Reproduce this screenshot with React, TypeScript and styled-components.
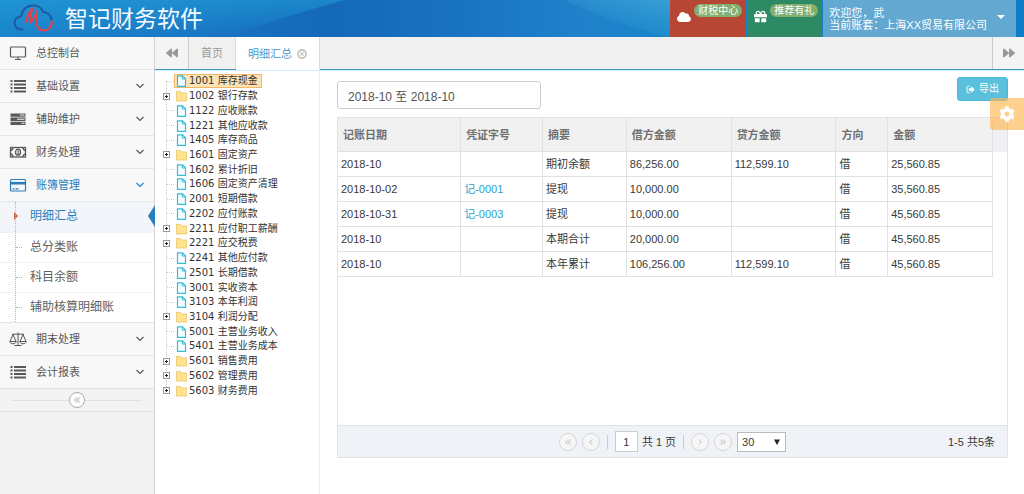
import React, { useState } from 'react';
import styled, { createGlobalStyle, css } from 'styled-components';
import { FaCloud, FaGift, FaCog, FaForward, FaBackward } from 'react-icons/fa';

const Global = createGlobalStyle`
  *, *::before, *::after { box-sizing: border-box; }
  body {
    margin: 0;
    background: #fff;
    color: #393939;
    font: 11px/16px "Liberation Sans", "Noto Sans CJK SC", sans-serif;
  }
  button, input, select { font: inherit; color: inherit; margin: 0; }
  button { cursor: pointer; }
  a { text-decoration: none; }
  ul { list-style: none; margin: 0; padding: 0; }
`;

const Page = styled.div`
  display: flex;
  flex-direction: column;
  min-height: 100vh;
`;

const Header = styled.header`
  position: relative;
  display: flex;
  justify-content: space-between;
  height: 37px;
  padding-right: 8px;
  overflow: hidden;
  background: linear-gradient(to right, #1a84ca 0%, #1a78c4 16%, #1468b8 32%, #1a74c2 46%, #2083cb 58%, #1583ca 66%, #0b7cc8 100%);
`;

const Waves = styled.svg`
  position: absolute;
  inset: 0;
  width: 100%;
  height: 100%;
`;

const Brand = styled.a`
  position: relative;
  display: flex;
  align-items: center;
  gap: 11px;
  padding-left: 13px;
  color: #f4faff;
  font-size: 23px;
  line-height: 36px;
`;

const HeaderNav = styled.nav`
  position: relative;
  display: flex;
  gap: 1px;
  color: #fff;
`;

const HeaderLink = styled.a<{ $bg: string }>`
  display: flex;
  align-items: flex-start;
  gap: 3px;
  padding: 4px 4px 0 7px;
  background: ${p => p.$bg};
  color: #fff;
  svg { margin-top: 6px; }
`;

const Pill = styled.span`
  padding: 0 4px;
  border-radius: 7px;
  background: #82af6f;
  font-size: 10px;
  line-height: 13px;
`;

const UserButton = styled.button`
  display: flex;
  align-items: center;
  gap: 10px;
  padding: 0 11px 0 6px;
  border: 0;
  background: #62a8d1;
  color: #fff;
  line-height: 12px;
  text-align: left;
  span { display: block; }
`;

const Caret = styled.i`
  border: 4px solid transparent;
  border-top-color: #fff;
  border-bottom: 0;
  margin-bottom: 4px;
`;

const Body = styled.div`
  display: flex;
  flex: 1;
`;

const Sidebar = styled.aside`
  flex: none;
  width: 155px;
  border-right: 1px solid #d4d4d4;
  background: #f2f2f2;
`;

const MenuItem = styled.li`
  border-top: 1px solid #e5e5e5;
  &:first-child { border-top: 0; }
`;

const MenuLink = styled.a<{ $open?: boolean }>`
  display: flex;
  align-items: center;
  height: 32px;
  padding: 0 9px 0 9px;
  background: #f8f8f8;
  color: ${p => (p.$open ? '#2b7dbc' : '#585858')};
  > span { flex: 1; padding-left: 9px; }
`;

const SubMenu = styled.ul`
  position: relative;
  border-top: 1px solid #e5e5e5;
  background: #fff;
  &::before {
    content: '';
    position: absolute;
    z-index: 1;
    left: 15px;
    top: 0;
    bottom: 0;
    border-left: 1px dotted #9dbdd6;
  }
`;

const SubLink = styled.a<{ $active?: boolean }>`
  position: relative;
  display: block;
  height: 30px;
  padding-left: 30px;
  color: #616161;
  font-size: 12px;
  line-height: 28px;
  li + li > & { border-top: 1px dotted #e4e4e4; }
  &::before {
    content: '';
    position: absolute;
    left: 16px;
    top: 14px;
    width: 6px;
    border-top: 1px dotted #9dbdd6;
  }
  ${p => p.$active && css`
    background: #f2f6fa;
    color: #2b7dbc;
    &::before {
      left: 14px;
      top: 10px;
      width: 0;
      border: 4px solid transparent;
      border-right-width: 0;
      border-left-color: #c86139;
    }
    &::after {
      content: '';
      position: absolute;
      right: -1px;
      top: 3px;
      border: 11px solid transparent;
      border-left-width: 0;
      border-right: 7px solid #2b7dbc;
    }
  `}
`;

const CollapseRow = styled.div`
  display: flex;
  align-items: center;
  height: 24px;
  padding: 0 12px;
  border-top: 1px solid #e0e0e0;
  border-bottom: 1px solid #e0e0e0;
  background: #f3f3f3;
  &::before, &::after {
    content: '';
    flex: 1;
    border-top: 1px solid #e0e0e0;
  }
`;

const RoundButton = styled.button<{ $muted?: boolean }>`
  display: grid;
  place-items: center;
  width: ${p => (p.$muted ? 18 : 16)}px;
  height: ${p => (p.$muted ? 18 : 16)}px;
  padding: 0;
  border: 1px solid ${p => (p.$muted ? '#d6d6d6' : '#aaa')};
  border-radius: 50%;
  background: ${p => (p.$muted ? '#f6f6f6' : '#fff')};
  color: ${p => (p.$muted ? '#b9b9b9' : '#999')};
`;

const Content = styled.div`
  display: flex;
  flex: 1;
  flex-direction: column;
  min-width: 0;
`;

const TabBar = styled.div`
  display: flex;
  height: 33px;
  border-bottom: 1px solid #4194c4;
  background: #f0f0f0;
`;

const TabArrow = styled.button<{ $end?: boolean }>`
  display: grid;
  place-items: center;
  width: ${p => (p.$end ? 32 : 34)}px;
  padding: 0;
  border: 0 solid #ccc;
  border-width: ${p => (p.$end ? '0 0 0 1px' : '0 1px 0 0')};
  margin-left: ${p => (p.$end ? 'auto' : 0)};
  background: #f4f4f4;
  color: #999;
`;

const Tab = styled.button<{ $active?: boolean }>`
  display: flex;
  align-items: center;
  gap: 5px;
  padding: 0 12px;
  border: 0;
  border-right: 1px solid #dcdcdc;
  margin-bottom: ${p => (p.$active ? -1 : 0)}px;
  background: ${p => (p.$active ? '#fff' : '#f0f0f0')};
  color: ${p => (p.$active ? '#4f99c6' : '#999')};
`;

const Workspace = styled.div`
  display: flex;
  flex: 1;
  border-top: 1px solid #d5edf5;
`;

const TreePane = styled.div`
  flex: none;
  width: 165px;
  padding: 3px 0 0 8px;
  border-right: 1px solid #e3f1f5;
`;

const Tree = styled.ul`
  position: relative;
  display: grid;
  grid-auto-rows: 1fr;
  height: 324px;
  color: #333;
  font: 10px/14px "DejaVu Sans", "Noto Sans CJK SC", sans-serif;
  &::before {
    content: '';
    position: absolute;
    left: 3px;
    top: 7px;
    bottom: 7px;
    border-left: 1px dotted #ccc;
  }
`;

const TreeRow = styled.li`
  display: flex;
  align-items: center;
`;

const Toggle = styled.button`
  position: relative;
  display: grid;
  place-items: center;
  width: 7px;
  height: 7px;
  padding: 0;
  border: 1px solid #999;
  margin-right: 4px;
  background: #fff;
  color: #222;
`;

const Stub = styled.i`
  width: 7px;
  margin: 0 0 0 4px;
  border-top: 1px dotted #ccc;
`;

const TreeLink = styled.a<{ $active?: boolean }>`
  display: flex;
  align-items: center;
  gap: 2px;
  height: 14px;
  padding: 0 3px 0 1px;
  border: 1px solid ${p => (p.$active ? '#f4b76a' : 'transparent')};
  background: ${p => (p.$active ? '#fde4b4' : 'transparent')};
  color: inherit;
  white-space: nowrap;
`;

const Main = styled.main`
  flex: 1;
  min-width: 0;
  padding: 6px 16px 16px 17px;
`;

const Toolbar = styled.div`
  display: flex;
  justify-content: space-between;
  align-items: flex-start;
  margin-bottom: 8px;
`;

const DateInput = styled.input`
  width: 204px;
  height: 28px;
  padding: 0 10px;
  border: 1px solid #ccc;
  border-radius: 3px;
  margin-top: 4px;
  background: #fff;
  color: #555;
  font-size: 12px;
  line-height: 16px;
`;

const ExportButton = styled.button`
  display: flex;
  align-items: center;
  gap: 4px;
  height: 24px;
  padding: 0 8px;
  border: 1px solid #46b8da;
  border-radius: 3px;
  background: #5bc0de;
  color: #fff;
  font-size: 10px;
`;

const Grid = styled.section`
  border: 1px solid #dfe3e8;
`;

const GridBody = styled.div`
  min-height: 307px;
  padding-right: 14px;
`;

const Table = styled.table`
  width: 100%;
  border-collapse: separate;
  border-spacing: 0;
  table-layout: fixed;
  th, td {
    overflow: hidden;
    border-right: 1px solid #e1e1e1;
    border-bottom: 1px solid #e1e1e1;
    text-align: left;
    white-space: nowrap;
  }
  th {
    height: 34px;
    padding: 0 5px;
    background: #f1f1f1;
    color: #707070;
  }
  th:last-child { box-shadow: 14px 0 #eff1f5; }
  td {
    height: 25px;
    padding: 0 3px;
  }
  a { color: #2a9fd0; }
`;

const Pager = styled.footer`
  display: grid;
  grid-template-columns: 1fr auto 1fr;
  align-items: center;
  height: 32px;
  border-top: 1px solid #e1e1e1;
  background: #eff3f8;
`;

const PagerControls = styled.div`
  grid-column: 2;
  display: flex;
  align-items: center;
  gap: 5px;
`;

const Divider = styled.i`
  height: 14px;
  border-left: 1px solid #ccc;
  margin: 0 2px;
`;

const PageInput = styled.input`
  width: 23px;
  height: 21px;
  padding: 0;
  border: 1px solid #ccc;
  background: #fff;
  text-align: center;
`;

const PageLabel = styled.label`
  display: flex;
  align-items: center;
  gap: 4px;
`;

const SelectBox = styled.span`
  position: relative;
  display: flex;
  select {
    width: 49px;
    height: 20px;
    padding: 0 4px;
    border: 1px solid #bbb;
    border-radius: 0;
    appearance: none;
    background: #fff;
  }
  svg {
    position: absolute;
    right: 6px;
    top: 7px;
    pointer-events: none;
  }
`;

const Summary = styled.span`
  justify-self: end;
  padding-right: 12px;
`;

const SettingsButton = styled.button`
  position: absolute;
  right: 0;
  top: 98px;
  display: grid;
  place-items: center;
  width: 34px;
  height: 32px;
  padding: 0;
  border: 0;
  border-radius: 3px 0 0 3px;
  background: rgba(255, 183, 82, 0.65);
  color: #fff;
`;

const Logo = () => (
  <svg width="41" height="30" viewBox="0 0 41 30" fill="none" strokeLinecap="round" strokeLinejoin="round" aria-hidden="true">
    <path d="M9.500 25.500C4.500 25.800 1.500 23 1.500 19c0-3.500 2.500-6 6.500-6.500C9.500 5.500 14 1.500 20.500 1.500c4.500 0 8 2.500 9.500 6.500 5 .2 8.500 3.500 8.500 8" stroke="#1c5ba4" strokeWidth="2" />
    <path d="M38.800 17.500c.4 5-3.300 9-8 9-4 0-7.300-3-7.300-7.500 0-3.500-.5-7 .5-12-1.500 5-3.500 8.500-6.500 11.500-.3-4.500.3-9.500 1.500-14-2.500 3.500-5 8-6.500 13.500" stroke="#e4424a" strokeWidth="2.200" />
  </svg>
);

type IconName = 'desktop' | 'list' | 'tasks' | 'money' | 'card' | 'scale';

const icons: Record<IconName, React.ReactNode> = {
  desktop: (
    <g fill="none" stroke="currentColor" strokeWidth="1.200">
      <rect x="1.500" y="1" width="15" height="10" rx="1" />
      <path d="M9 11v2.500M6 13.500h6" />
    </g>
  ),
  list: <path fill="currentColor" d="M1.500 1h2v2h-2zM5 1h12v2H5zM1.500 4.500h2v2h-2zM5 4.500h12v2H5zM1.500 8h2v2h-2zM5 8h12v2H5zM1.500 11.500h2v2h-2zM5 11.500h12v2H5z" />,
  tasks: <path fill="currentColor" fillRule="evenodd" d="M1.500 1.500h15v3.300h-15zM11 2.600v1h4.500v-1zM1.500 5.600h15v3.300h-15zM8 6.700v1h7.500v-1zM1.500 9.700h15v3.300h-15zM12.500 10.800v1h3v-1z" />,
  money: (
    <g fill="none" stroke="currentColor" strokeWidth="1.300">
      <rect x="1.500" y="2.500" width="15" height="9.500" />
      <path d="M1.500 5.500a3 3 0 0 0 2.500-3M16.500 5.500a3 3 0 0 1-2.500-3M1.500 9a3 3 0 0 1 2.500 3M16.500 9a3 3 0 0 0-2.500 3" />
      <ellipse cx="9" cy="7.200" rx="2.500" ry="3" />
      <path d="M8.300 6l.9-.5v3M8.200 8.700h1.900" strokeWidth=".9" />
    </g>
  ),
  card: (
    <g fill="none" stroke="currentColor" strokeWidth="1.200">
      <rect x="1.500" y="1.500" width="15" height="11.500" rx="1" />
      <path d="M1.500 5.200h15" strokeWidth="2.600" />
      <path d="M3.500 10.800h2M6.500 10.800h3" />
    </g>
  ),
  scale: (
    <g fill="none" stroke="currentColor" strokeLinejoin="round">
      <path d="M9 .5v12.500M5.500 13.500h7M3 2.200h12M4 2.500L1 9.500M4 2.500l3 7M14 2.500l-3 7M14 2.500l3 7" />
      <path d="M.8 9.500h6.400c-.4 1.700-1.500 2.300-3.200 2.300S1.200 11.200.8 9.500zM10.800 9.500h6.400c-.4 1.700-1.500 2.300-3.200 2.300s-2.800-.6-3.200-2.300z" />
    </g>
  ),
};

const MenuIcon = ({ name }: { name: IconName }) => (
  <svg width="18" height="15" viewBox="0 0 18 15" aria-hidden="true">{icons[name]}</svg>
);

const ChevronDown = () => (
  <svg width="10" height="6" viewBox="0 0 10 6" fill="none" stroke="currentColor" aria-hidden="true">
    <path d="M1.500 1L5 4.500 8.500 1" strokeWidth="1.200" />
  </svg>
);

const Angle = ({ double, right }: { double?: boolean; right?: boolean }) => (
  <svg width="8" height="8" viewBox="0 0 8 8" fill="none" stroke="currentColor" aria-hidden="true">
    <g transform={right ? 'rotate(180 4 4)' : undefined}>
      {double ? <path d="M4 1.500L1.500 4 4 6.500M6.800 1.500L4.300 4l2.500 2.500" /> : <path d="M5.200 1.500L2.700 4l2.500 2.500" />}
    </g>
  </svg>
);

const FileIcon = () => (
  <svg width="11" height="12" viewBox="0 0 11 12" aria-hidden="true">
    <path d="M1.500.8h5l3 3v7.500h-8z" fill="#f5fdff" stroke="#35bcd8" strokeWidth="1.200" />
    <path d="M6.300.8v3.200h3.200" fill="none" stroke="#35bcd8" />
  </svg>
);

const FolderIcon = () => (
  <svg width="11" height="12" viewBox="0 0 11 12" aria-hidden="true">
    <path d="M.5 1.500h4l1 1.500h5.200v8H.5z" fill="#ffe390" stroke="#e9c566" strokeWidth=".8" />
  </svg>
);

const menu: { label: string; icon: IconName; children?: string[] }[] = [
  { label: '总控制台', icon: 'desktop' },
  { label: '基础设置', icon: 'list', children: [] },
  { label: '辅助维护', icon: 'tasks', children: [] },
  { label: '财务处理', icon: 'money', children: [] },
  { label: '账簿管理', icon: 'card', children: ['明细汇总', '总分类账', '科目余额', '辅助核算明细账'] },
  { label: '期末处理', icon: 'scale', children: [] },
  { label: '会计报表', icon: 'list', children: [] },
];

const accounts: [string, string, boolean?][] = [
  ['1001', '库存现金'],
  ['1002', '银行存款', true],
  ['1122', '应收账款'],
  ['1221', '其他应收款'],
  ['1405', '库存商品'],
  ['1601', '固定资产', true],
  ['1602', '累计折旧'],
  ['1606', '固定资产清理'],
  ['2001', '短期借款'],
  ['2202', '应付账款'],
  ['2211', '应付职工薪酬', true],
  ['2221', '应交税费', true],
  ['2241', '其他应付款'],
  ['2501', '长期借款'],
  ['3001', '实收资本'],
  ['3103', '本年利润'],
  ['3104', '利润分配', true],
  ['5001', '主营业务收入'],
  ['5401', '主营业务成本'],
  ['5601', '销售费用', true],
  ['5602', '管理费用', true],
  ['5603', '财务费用', true],
];

const columns: [string, string][] = [
  ['记账日期', '18.8%'],
  ['凭证字号', '12.5%'],
  ['摘要', '12.8%'],
  ['借方金额', '16%'],
  ['贷方金额', '16%'],
  ['方向', '7.9%'],
  ['金额', '16%'],
];

const entries = [
  ['2018-10', '', '期初余额', '86,256.00', '112,599.10', '借', '25,560.85'],
  ['2018-10-02', '记-0001', '提现', '10,000.00', '', '借', '35,560.85'],
  ['2018-10-31', '记-0003', '提现', '10,000.00', '', '借', '45,560.85'],
  ['2018-10', '', '本期合计', '20,000.00', '', '借', '45,560.85'],
  ['2018-10', '', '本年累计', '106,256.00', '112,599.10', '借', '45,560.85'],
];

export default function App() {
  const [account, setAccount] = useState('1001');
  const [period, setPeriod] = useState('2018-10 至 2018-10');
  const [page, setPage] = useState('1');

  return (
    <Page>
      <Global />
      <Header>
        <Waves viewBox="0 0 1024 37" preserveAspectRatio="none" aria-hidden="true">
          <defs>
            <linearGradient id="glow" x1="0" y1="0" x2="0" y2="1">
              <stop offset="0" stopColor="#22a6de" stopOpacity=".5" />
              <stop offset="1" stopColor="#22a6de" stopOpacity="0" />
            </linearGradient>
            <linearGradient id="corner" x1="0" y1="1" x2="1" y2="0">
              <stop offset=".3" stopColor="#4fb4dc" stopOpacity="0" />
              <stop offset="1" stopColor="#4fb4dc" stopOpacity=".6" />
            </linearGradient>
          </defs>
          <path d="M0 0v37h225C260 26 300 12 345 0z" fill="url(#glow)" />
          <path d="M565 0c20 10 60 26 100 37h10V0z" fill="url(#corner)" />
        </Waves>
        <Brand href="#"><Logo />智记财务软件</Brand>
        <HeaderNav>
          <HeaderLink href="#" $bg="#b74635"><FaCloud size={14} /><Pill>财税中心</Pill></HeaderLink>
          <HeaderLink href="#" $bg="#2e8965"><FaGift size={13} /><Pill>推荐有礼</Pill></HeaderLink>
          <UserButton type="button">
            <span><span>欢迎您，武</span><span>当前账套：上海XX贸易有限公司</span></span>
            <Caret />
          </UserButton>
        </HeaderNav>
      </Header>
      <Body>
        <Sidebar>
          <ul>
            {menu.map(item => {
              const open = !!item.children?.length;
              return (
                <MenuItem key={item.label}>
                  <MenuLink href="#" $open={open}>
                    <MenuIcon name={item.icon} />
                    <span>{item.label}</span>
                    {item.children && <ChevronDown />}
                  </MenuLink>
                  {open && (
                    <SubMenu>
                      {item.children!.map((child, i) => (
                        <li key={child}><SubLink href="#" $active={i === 0}>{child}</SubLink></li>
                      ))}
                    </SubMenu>
                  )}
                </MenuItem>
              );
            })}
          </ul>
          <CollapseRow>
            <RoundButton type="button" aria-label="收起菜单"><Angle double /></RoundButton>
          </CollapseRow>
        </Sidebar>
        <Content>
          <TabBar>
            <TabArrow type="button" aria-label="向左"><FaBackward size={12} /></TabArrow>
            <Tab type="button">首页</Tab>
            <Tab type="button" $active>
              明细汇总
              <svg width="10" height="10" viewBox="0 0 10 10" aria-hidden="true">
                <circle cx="5" cy="5" r="4" fill="#fff" stroke="#c4c4c4" strokeWidth="1.800" />
                <path d="M3.400 3.400l3.200 3.200M6.600 3.400L3.400 6.600" stroke="#c4c4c4" strokeWidth="1.300" />
              </svg>
            </Tab>
            <TabArrow type="button" $end aria-label="向右"><FaForward size={12} /></TabArrow>
          </TabBar>
          <Workspace>
            <TreePane>
              <Tree>
                {accounts.map(([code, name, folder]) => (
                  <TreeRow key={code}>
                    {folder ? (
                      <Toggle type="button" aria-label={`展开 ${name}`}>
                        <svg width="5" height="5" viewBox="0 0 5 5" aria-hidden="true">
                          <path d="M1 2.500h3M2.500 1v3" stroke="currentColor" />
                        </svg>
                      </Toggle>
                    ) : <Stub />}
                    <TreeLink href="#" $active={account === code} onClick={() => setAccount(code)}>
                      {folder ? <FolderIcon /> : <FileIcon />}
                      {code} {name}
                    </TreeLink>
                  </TreeRow>
                ))}
              </Tree>
            </TreePane>
            <Main>
              <Toolbar>
                <DateInput aria-label="会计期间" value={period} onChange={e => setPeriod(e.target.value)} />
                <ExportButton type="button">
                  <svg width="9" height="9" viewBox="0 0 9 9" aria-hidden="true">
                    <path d="M3.500 1.200H2.200a1.200 1.200 0 0 0-1.200 1.200v4.200a1.200 1.200 0 0 0 1.200 1.200h1.300" fill="none" stroke="currentColor" />
                    <path d="M5.200 1.300L8.800 4.500 5.200 7.700V5.700H2.800V3.300h2.400z" fill="currentColor" />
                  </svg>
                  导出
                </ExportButton>
              </Toolbar>
              <Grid>
                <GridBody>
                  <Table>
                    <colgroup>
                      {columns.map(([label, width]) => <col key={label} width={width} />)}
                    </colgroup>
                    <thead>
                      <tr>{columns.map(([label]) => <th key={label}>{label}</th>)}</tr>
                    </thead>
                    <tbody>
                      {entries.map((entry, r) => (
                        <tr key={r}>
                          {entry.map((value, c) => (
                            <td key={c}>{c === 1 && value ? <a href="#">{value}</a> : value}</td>
                          ))}
                        </tr>
                      ))}
                    </tbody>
                  </Table>
                </GridBody>
                <Pager>
                  <PagerControls>
                    <RoundButton type="button" $muted aria-label="首页"><Angle double /></RoundButton>
                    <RoundButton type="button" $muted aria-label="上一页"><Angle /></RoundButton>
                    <Divider />
                    <PageLabel>
                      <PageInput value={page} onChange={e => setPage(e.target.value)} />
                      共 1 页
                    </PageLabel>
                    <Divider />
                    <RoundButton type="button" $muted aria-label="下一页"><Angle right /></RoundButton>
                    <RoundButton type="button" $muted aria-label="末页"><Angle double right /></RoundButton>
                    <SelectBox>
                      <select aria-label="每页条数" defaultValue="30">
                        <option>30</option>
                        <option>50</option>
                        <option>100</option>
                      </select>
                      <svg width="6" height="6" viewBox="0 0 6 6" aria-hidden="true"><path d="M0 .5h6L3 6z" fill="#222" /></svg>
                    </SelectBox>
                  </PagerControls>
                  <Summary>1-5 共5条</Summary>
                </Pager>
              </Grid>
            </Main>
          </Workspace>
        </Content>
      </Body>
      <SettingsButton type="button" aria-label="设置"><FaCog size={16} /></SettingsButton>
    </Page>
  );
}
